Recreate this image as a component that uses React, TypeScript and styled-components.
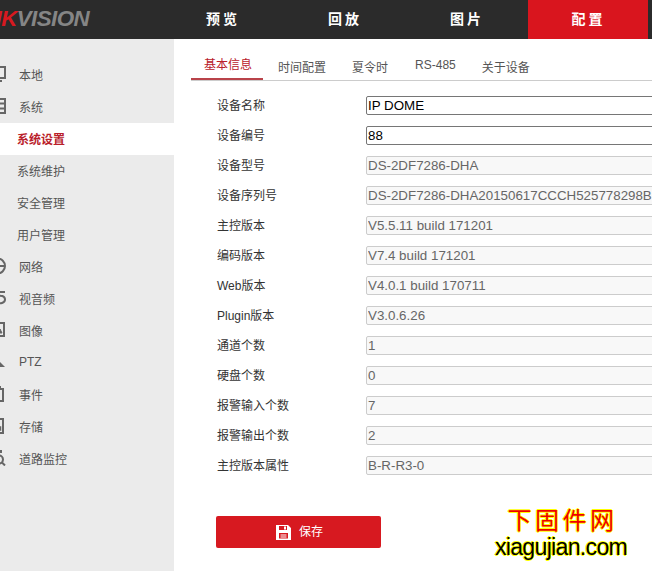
import styled, { createGlobalStyle } from "styled-components";

const GlobalStyle = createGlobalStyle`
  html, body {
    margin: 0;
    padding: 0;
    background: #fff;
    overflow: hidden;
  }
  * {
    box-sizing: border-box;
  }
`;

const navItems = ["预览", "回放", "图片", "配置"];
const tabs = [
  { label: "基本信息", gap: 15 },
  { label: "时间配置", gap: 26 },
  { label: "夏令时", gap: 27 },
  { label: "RS-485", gap: 27 },
  { label: "关于设备", gap: 0 },
];

const fields = [
  { label: "设备名称", value: "IP DOME", editable: true },
  { label: "设备编号", value: "88", editable: true },
  { label: "设备型号", value: "DS-2DF7286-DHA" },
  { label: "设备序列号", value: "DS-2DF7286-DHA20150617CCCH525778298B" },
  { label: "主控版本", value: "V5.5.11 build 171201" },
  { label: "编码版本", value: "V7.4 build 171201" },
  { label: "Web版本", value: "V4.0.1 build 170711" },
  { label: "Plugin版本", value: "V3.0.6.26" },
  { label: "通道个数", value: "1" },
  { label: "硬盘个数", value: "0" },
  { label: "报警输入个数", value: "7" },
  { label: "报警输出个数", value: "2" },
  { label: "主控版本属性", value: "B-R-R3-0" },
];

const IconLocal = () => (
  <svg viewBox="0 0 16 16" fill="none" stroke="#666" strokeWidth="2">
    <rect x="1" y="1" width="14" height="11" />
    <path d="M4 15h8" />
  </svg>
);
const IconSystem = () => (
  <svg viewBox="0 0 16 16" fill="none" stroke="#666" strokeWidth="2">
    <rect x="1" y="1" width="14" height="14" />
    <path d="M1 5.5h14M1 10.5h14M6 1v14" />
  </svg>
);
const IconNetwork = () => (
  <svg viewBox="0 0 16 16" fill="none" stroke="#666" strokeWidth="2">
    <circle cx="7.5" cy="8" r="7.5" />
    <path d="M1 8h14" />
  </svg>
);
const IconVideo = () => (
  <svg viewBox="0 0 16 16" fill="none" stroke="#666" strokeWidth="2">
    <path d="M8 2h7M6 6c5-1 9 0 9 3.5S10 14 6 13" />
  </svg>
);
const IconImage = () => (
  <svg viewBox="0 0 16 16" fill="none" stroke="#666" strokeWidth="2">
    <rect x="1" y="1" width="13" height="13" />
    <path d="M8 11l2-4 2 4z" fill="#666" strokeWidth="1" />
  </svg>
);
const IconPtz = () => (
  <svg viewBox="0 0 16 16" fill="#666">
    <path d="M8 6l7 7H1z" />
  </svg>
);
const IconEvent = () => (
  <svg viewBox="0 0 16 16" fill="none" stroke="#666" strokeWidth="2">
    <rect x="1" y="3" width="12" height="12" />
    <path d="M10 0v4" />
  </svg>
);
const IconStorage = () => (
  <svg viewBox="0 0 16 16" fill="none" stroke="#666" strokeWidth="2">
    <path d="M5 1h8v14H1V5z" />
    <path d="M8 9h2.5v3H8z" strokeWidth="1.5" />
  </svg>
);
const IconRoad = () => (
  <svg viewBox="0 0 16 16" fill="none" stroke="#666" strokeWidth="2">
    <circle cx="9" cy="9.5" r="4" />
    <path d="M12 12.5l3 3M11 0v3" />
  </svg>
);

type MenuEntry = {
  label: string;
  icon?: React.ReactNode;
  active?: boolean;
};

const menu: MenuEntry[] = [
  { label: "本地", icon: <IconLocal /> },
  { label: "系统", icon: <IconSystem /> },
  { label: "系统设置", active: true },
  { label: "系统维护" },
  { label: "安全管理" },
  { label: "用户管理" },
  { label: "网络", icon: <IconNetwork /> },
  { label: "视音频", icon: <IconVideo /> },
  { label: "图像", icon: <IconImage /> },
  { label: "PTZ", icon: <IconPtz /> },
  { label: "事件", icon: <IconEvent /> },
  { label: "存储", icon: <IconStorage /> },
  { label: "道路监控", icon: <IconRoad /> },
];

const App = () => (
  <Page>
    <GlobalStyle />
    <Header>
      <Logo>
        <LogoRed>HIK</LogoRed>VISION
      </Logo>
      <Nav>
        {navItems.map((item) => (
          <NavItem key={item} $active={item === "配置"}>
            {item}
          </NavItem>
        ))}
      </Nav>
    </Header>
    <Body>
      <Sidebar>
        {menu.map((entry) => (
          <MenuRow key={entry.label} $active={entry.active}>
            {entry.icon ? <MenuIcon>{entry.icon}</MenuIcon> : null}
            <MenuLabel $sub={!entry.icon}>{entry.label}</MenuLabel>
          </MenuRow>
        ))}
      </Sidebar>
      <Content>
        <Tabs>
          {tabs.map((tab, index) => (
            <Tab key={tab.label} $active={index === 0} $gap={tab.gap} $raised={tab.label === "RS-485"}>
              {tab.label}
            </Tab>
          ))}
        </Tabs>
        <Form>
          {fields.map((field) => (
            <Row key={field.label}>
              <Label>{field.label}</Label>
              <Field readOnly value={field.value} $editable={field.editable} />
            </Row>
          ))}
        </Form>
        <SaveButton>
          <svg width="15" height="15" viewBox="0 0 15 15" fill="#fff">
            <path
              fillRule="evenodd"
              d="M0 0h12l3 3v12H0zM3 1v4h8V1zM8 1.5h2v3H8zM3 8v5.5h9V8zM4.5 9.5h6v1h-6zM4.5 11.5h6v1h-6z"
            />
          </svg>
          <SaveText>保存</SaveText>
        </SaveButton>
      </Content>
    </Body>
    <Watermark>
      <WatermarkTitle>下固件网</WatermarkTitle>
      <WatermarkUrl>xiagujian.com</WatermarkUrl>
    </Watermark>
  </Page>
);

const fontStack = `"Liberation Sans", "Noto Sans CJK SC", sans-serif`;

const Page = styled.div`
  position: relative;
  width: 652px;
  height: 571px;
  overflow: hidden;
  font-family: ${fontStack};
  font-size: 12px;
  color: #333;
`;

const Header = styled.header`
  display: flex;
  height: 39px;
  background: #2b2b2b;
`;

const Logo = styled.div`
  width: 162px;
  flex: none;
  margin-left: -20px;
  margin-right: 20px;
  font-size: 22.4px;
  line-height: 38px;
  font-weight: 700;
  font-style: italic;
  letter-spacing: -0.6px;
  color: #858585;
  white-space: nowrap;
`;

const LogoRed = styled.span`
  color: #d71920;
`;

const Nav = styled.nav`
  display: flex;
`;

const NavItem = styled.div<{ $active?: boolean }>`
  width: ${(p) => (p.$active ? "120px" : "122px")};
  padding-left: ${(p) => (p.$active ? "1px" : "0")};
  text-align: center;
  line-height: 38px;
  font-size: 14px;
  font-weight: 700;
  letter-spacing: 3px;
  color: #fff;
  background: ${(p) => (p.$active ? "#d9151e" : "transparent")};
`;

const Body = styled.div`
  display: flex;
  height: 532px;
`;

const Sidebar = styled.aside`
  width: 174px;
  flex: none;
  padding-top: 20px;
  background: #ebebeb;
`;

const MenuRow = styled.div<{ $active?: boolean }>`
  display: flex;
  align-items: center;
  height: 32px;
  background: ${(p) => (p.$active ? "#fff" : "transparent")};
  color: ${(p) => (p.$active ? "#b9202a" : "#555")};
  font-weight: ${(p) => (p.$active ? 700 : 400)};
`;

const MenuIcon = styled.span`
  display: flex;
  width: 16px;
  height: 16px;
  margin-left: -10px;
  margin-right: 13px;
  margin-top: -2px;

  svg {
    width: 16px;
    height: 16px;
  }
`;

const MenuLabel = styled.span<{ $sub: boolean }>`
  margin-left: ${(p) => (p.$sub ? "17px" : "0")};
  padding-bottom: 2px;
`;

const Content = styled.main`
  flex: 1;
  min-width: 0;
  padding: 0 0 0 17px;
`;

const Tabs = styled.div`
  display: flex;
  align-items: stretch;
  height: 42px;
  margin-right: -1px;
  border-bottom: 1px solid #ccc;
`;

const Tab = styled.div<{ $active: boolean; $gap: number; $raised: boolean }>`
  padding: ${(p) => (p.$active ? "19px 11px 0 13px" : p.$raised ? "19px 0 0" : "22px 0 0")};
  margin-right: ${(p) => p.$gap}px;
  line-height: 14px;
  color: ${(p) => (p.$active ? "#b9202a" : "#555")};
  border-bottom: ${(p) => (p.$active ? "2px solid #b9434a" : "none")};
  height: ${(p) => (p.$active ? "41px" : "auto")};
  transform: ${(p) => (p.$gap === 0 ? "translateX(-1px)" : "none")};
`;

const Form = styled.div`
  display: flex;
  flex-direction: column;
  padding: 9px 0 0 26px;
`;

const Row = styled.div`
  display: flex;
  align-items: center;
  height: 30px;
`;

const Label = styled.label`
  width: 149px;
  flex: none;
  color: #333;
  padding-bottom: 2px;
`;

const Field = styled.input<{ $editable?: boolean }>`
  width: 320px;
  flex: none;
  height: 19px;
  padding: 0 1px;
  font-family: ${fontStack};
  font-size: 13.33px;
  border-radius: 2px;
  outline: none;
  border: 1px solid ${(p) => (p.$editable ? "#767676" : "#ccc")};
  background: ${(p) => (p.$editable ? "#fff" : "#f8f8f8")};
  color: ${(p) => (p.$editable ? "#000" : "#666")};
`;

const SaveButton = styled.button`
  display: flex;
  align-items: center;
  justify-content: center;
  gap: 8px;
  width: 165px;
  height: 32px;
  margin: 36px 0 0 25px;
  padding: 0 0 0 2px;
  border: none;
  border-radius: 2px;
  background: #d71920;
  color: #fff;
  font-family: ${fontStack};
  font-size: 12px;
`;

const SaveText = styled.span`
  padding-bottom: 3px;
`;

const Watermark = styled.div`
  position: absolute;
  left: 494px;
  top: 503px;
  width: 134px;
  text-align: center;
`;

const WatermarkTitle = styled.div`
  font-family: "Noto Sans CJK SC", sans-serif;
  font-size: 24px;
  line-height: 32px;
  letter-spacing: 3.5px;
  padding-left: 3px;
  color: #ee0000;
  text-shadow: 1px 0 #ff0, -1px 0 #ff0, 0 1px #ff0, 0 -1px #ff0;
`;

const WatermarkUrl = styled.div`
  font-family: "Liberation Sans", sans-serif;
  font-size: 23px;
  line-height: 24px;
  letter-spacing: -0.65px;
  color: #000;
  white-space: nowrap;
  text-shadow: 1px 0 #ff0, -1px 0 #ff0, 0 1px #ff0, 0 -1px #ff0;
`;

export default App;
